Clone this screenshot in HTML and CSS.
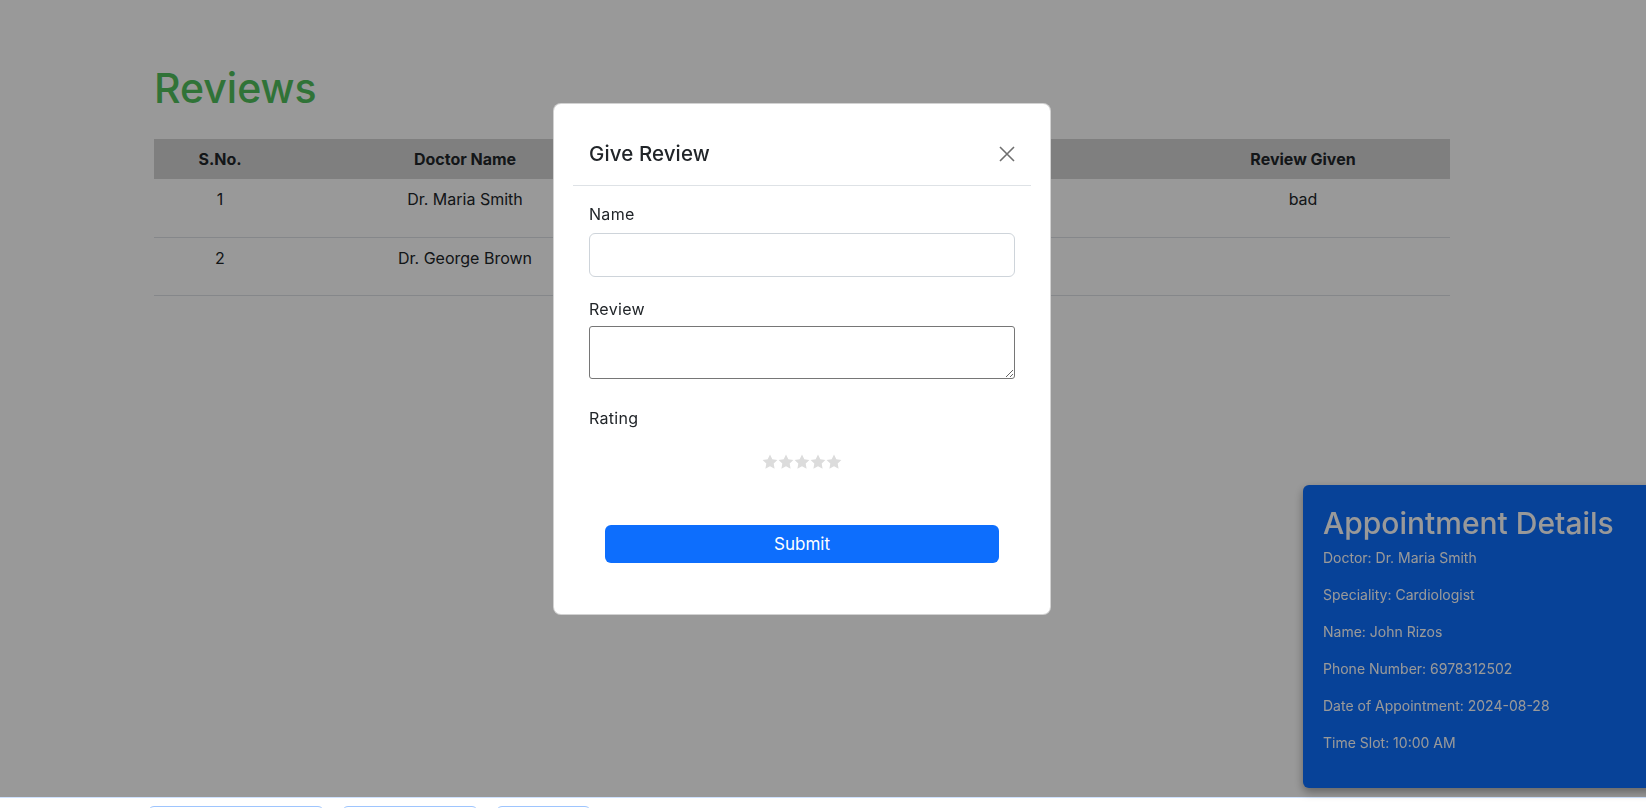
FILE: index.html
```html
<!DOCTYPE html>
<html lang="en">
<head>
<meta charset="utf-8">
<title>Reviews</title>
<link rel="stylesheet" href="styles.css">
</head>
<body>
<div class="app">
  <div class="container">
    <h1 class="page-title">Reviews</h1>
    <table class="reviews">
      <colgroup>
        <col class="c-sno"><col class="c-doc"><col class="c-spec"><col class="c-rev">
      </colgroup>
      <thead>
        <tr><th>S.No.</th><th>Doctor Name</th><th>Doctor Speciality</th><th>Review Given</th></tr>
      </thead>
      <tbody>
        <tr><td>1</td><td>Dr. Maria Smith</td><td>Cardiologist</td><td>bad</td></tr>
        <tr><td>2</td><td>Dr. George Brown</td><td>Dermatologist</td><td></td></tr>
      </tbody>
    </table>
  </div>
</div>
<div class="bottom-strip">
  <button class="outline-btn w1" aria-label="Appointments"></button>
  <button class="outline-btn w2" aria-label="Consultation"></button>
  <button class="outline-btn w3" aria-label="Reviews"></button>
</div>

<aside class="appt-card">
  <h2 class="appt-title">Appointment Details</h2>
  <p>Doctor: Dr. Maria Smith</p>
  <p>Speciality: Cardiologist</p>
  <p>Name: John Rizos</p>
  <p>Phone Number: 6978312502</p>
  <p>Date of Appointment: 2024-08-28</p>
  <p>Time Slot: 10:00 AM</p>
</aside>

<div class="backdrop"></div>

<div class="modal">
  <div class="modal-header">
    <h3 class="modal-title">Give Review</h3>
    <button class="close-btn" aria-label="Close">
      <svg width="16" height="16" viewBox="0 0 16 16"><path d="M1 1L15 15M15 1L1 15" stroke="#6f6f6f" stroke-width="1.6" fill="none"/></svg>
    </button>
  </div>
  <form class="modal-body">
    <div class="group">
      <label class="lbl lbl-name">Name</label>
      <input class="text-input" type="text">
    </div>
    <div class="group">
      <label class="lbl lbl-review">Review</label>
      <textarea class="text-area"></textarea>
    </div>
    <div class="group group-rating">
      <label class="lbl">Rating</label>
      <div class="stars">
        <svg width="16" height="16" viewBox="0 0 16 16"><path d="M8 .6l2.3 4.7 5.1.7-3.7 3.6.9 5.1L8 12.3l-4.6 2.4.9-5.1L.6 6l5.1-.7z" fill="#dcdcdc"/></svg>
        <svg width="16" height="16" viewBox="0 0 16 16"><path d="M8 .6l2.3 4.7 5.1.7-3.7 3.6.9 5.1L8 12.3l-4.6 2.4.9-5.1L.6 6l5.1-.7z" fill="#dcdcdc"/></svg>
        <svg width="16" height="16" viewBox="0 0 16 16"><path d="M8 .6l2.3 4.7 5.1.7-3.7 3.6.9 5.1L8 12.3l-4.6 2.4.9-5.1L.6 6l5.1-.7z" fill="#dcdcdc"/></svg>
        <svg width="16" height="16" viewBox="0 0 16 16"><path d="M8 .6l2.3 4.7 5.1.7-3.7 3.6.9 5.1L8 12.3l-4.6 2.4.9-5.1L.6 6l5.1-.7z" fill="#dcdcdc"/></svg>
        <svg width="16" height="16" viewBox="0 0 16 16"><path d="M8 .6l2.3 4.7 5.1.7-3.7 3.6.9 5.1L8 12.3l-4.6 2.4.9-5.1L.6 6l5.1-.7z" fill="#dcdcdc"/></svg>
      </div>
    </div>
    <button type="button" class="submit-btn">Submit</button>
  </form>
</div>
</body>
</html>
```
FILE: styles.css
```css
* { box-sizing: border-box; }
html, body { margin: 0; padding: 0; }
body {
  font-family: Inter, "Open Sans", "Liberation Sans", sans-serif;
  color: #212529;
  background: #fff;
  width: 1646px;
  height: 808px;
  overflow: hidden;
}
.app {
  width: 1604px;
  height: 797px;
}
.container {
  width: 1320px;
  margin: 0 auto;
  padding: 64px 12px 0;
}
.page-title {
  margin: 0 0 27px;
  font-size: 41px;
  line-height: 48px;
  font-weight: 500;
  color: #50c05c;
}
.reviews {
  width: 1296px;
  border-collapse: collapse;
  table-layout: fixed;
  font-size: 16px;
}
.c-sno { width: 132px; }
.c-doc { width: 358px; }
.c-spec { width: 512px; }
.c-rev { width: 294px; }
.reviews th {
  background: #d4d4d4;
  font-weight: 700;
  line-height: 24px;
  padding: 8px;
  text-align: center;
}
.reviews td {
  padding: 8px;
  line-height: 24px;
  height: 58px;
  vertical-align: top;
  text-align: center;
  border-bottom: 1px solid #dee2e6;
}
.bottom-strip {
  border-top: 1px solid #cfe2ff;
  display: flex;
  gap: 18px;
  padding: 8px 0 0 148px;
}
.outline-btn {
  height: 38px;
  border: 1px solid #9ec5fe;
  border-radius: 6px;
  background: #fff;
}
.w1 { width: 176px; }
.w2 { width: 136px; }
.w3 { width: 95px; }

.appt-card {
  position: fixed;
  left: 1303px;
  top: 485px;
  width: 420px;
  height: 303px;
  background: #0d6efd;
  color: #fff;
  border-radius: 6px;
  padding: 20px;
  box-shadow: 0 4px 10px rgba(0,0,0,.35);
  z-index: 1;
}
.appt-title {
  margin: 0 0 6px;
  font-size: 30px;
  line-height: 36px;
  font-weight: 500;
}
.appt-card p {
  margin: 0 0 16px;
  font-size: 14px;
  line-height: 21px;
}
.backdrop {
  position: fixed;
  left: 0;
  top: 0;
  width: 1646px;
  height: 797px;
  background: rgba(0,0,0,.4);
  z-index: 10;
}
.modal {
  position: absolute;
  left: 553px;
  top: 103px;
  width: 498px;
  background: #fff;
  border: 1px solid rgba(0,0,0,.175);
  border-radius: 8px;
  padding: 19px;
  z-index: 20;
}
.modal-header {
  display: flex;
  justify-content: space-between;
  align-items: center;
  padding: 16px;
  border-bottom: 1px solid #dee2e6;
}
.modal-title {
  margin: 0;
  font-size: 20.5px;
  line-height: 30px;
  font-weight: 500;
  letter-spacing: .1px;
}
.close-btn {
  border: 0;
  background: transparent;
  padding: 0;
  width: 16px;
  height: 16px;
  display: flex;
}
.modal-body {
  display: flex;
  flex-direction: column;
  padding: 16px;
  margin: 0;
}
.group { margin-bottom: 20px; display: flex; flex-direction: column; }
.lbl {
  font-size: 16px;
  line-height: 24px;
  margin-bottom: 7px;
  letter-spacing: .3px;
}
.lbl-review { margin-bottom: 5px; }
.text-input {
  height: 44px;
  border: 1px solid #ced4da;
  border-radius: 6px;
  width: 100%;
}
.text-area {
  display: block;
  height: 53px;
  width: 100%;
  border: 1px solid #767676;
  border-radius: 3px;
  margin-bottom: 7px;
}
.group-rating { margin-bottom: 0; }
.group-rating .lbl { margin-bottom: 0; }
.stars {
  margin-top: 24px;
  display: flex;
  justify-content: center;
  height: 16px;
}
.submit-btn {
  margin: 55px 16px 16px;
  height: 38px;
  border: 0;
  border-radius: 6px;
  background: #0d6efd;
  color: #fff;
  font: inherit;
  font-size: 17px;
}
```
